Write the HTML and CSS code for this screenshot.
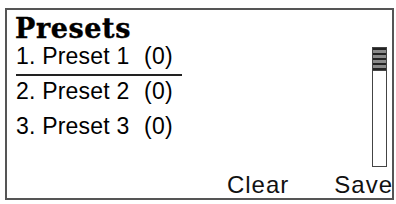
FILE: index.html
```html
<!DOCTYPE html>
<html>
  <head>
    <meta charset="utf-8" />
    <title>Presets</title>
    <link rel="stylesheet" href="styles.css">
  </head>
  <body>
    <div class="presets-panel">
      <h1 class="presets-title">Presets</h1>

      <div class="presets-body">
        <ul class="preset-list">
          <li class="preset selected">1. Preset 1 <span class="count">(0)</span></li>
          <li class="preset">2. Preset 2 <span class="count">(0)</span></li>
          <li class="preset">3. Preset 3 <span class="count">(0)</span></li>
        </ul>
        <div class="scrollbar">
          <div class="scroll-thumb"></div>
        </div>
      </div>

      <div class="presets-footer">
        <span class="action">Clear</span>
        <span class="action">Save</span>
      </div>
    </div>
  </body>
</html>
```

FILE: styles.css
```css
body {
  margin: 0;
  background-color: white;
}

.presets-panel {
  margin: 8px 0 0 5px;
  width: 389px;
  height: 192px;
  box-sizing: border-box;
  border: 2px solid #555;
  display: flex;
  flex-direction: column;
  overflow: hidden;
}

.presets-title {
  margin: 0;
  padding: 6px 0 0 8px;
  font-family: "DejaVu Serif", serif;
  font-weight: 900;
  font-size: 27px;
  line-height: 26px;
  letter-spacing: 0.6px;
  color: #000;
  -webkit-text-stroke: 0.4px #000;
}

.presets-body {
  display: flex;
  justify-content: space-between;
}

.preset-list {
  list-style: none;
  margin: 0;
  padding: 0 0 0 9px;
  width: 166px;
  font-family: "Liberation Sans", Arial, sans-serif;
  font-size: 23px;
  letter-spacing: 0.2px;
  color: #000;
}

.preset {
  line-height: 28px;
  padding-bottom: 4px;
  margin-bottom: 1px;
  border-bottom: 2px solid transparent;
}
.preset.selected {
  border-bottom-color: #222;
}

.count {
  margin-left: 8px;
}

.scrollbar {
  margin: 5px 5px 0 0;
  width: 15px;
  height: 120px;
  box-sizing: border-box;
  border: 1px solid #444;
  background-color: white;
}

.scroll-thumb {
  height: 22px;
  border-bottom: 1px solid #444;
  background: repeating-linear-gradient(
    to bottom,
    #222 0px,
    #222 2px,
    #8a8a8a 2px,
    #8a8a8a 5px
  );
}

.presets-footer {
  margin-top: auto;
  display: flex;
  justify-content: flex-end;
  gap: 46px;
  font-family: "Liberation Sans", Arial, sans-serif;
  font-size: 24px;
  line-height: 27px;
  letter-spacing: 1px;
  color: #111;
}

.action {
  margin-right: -1px;
}
```
